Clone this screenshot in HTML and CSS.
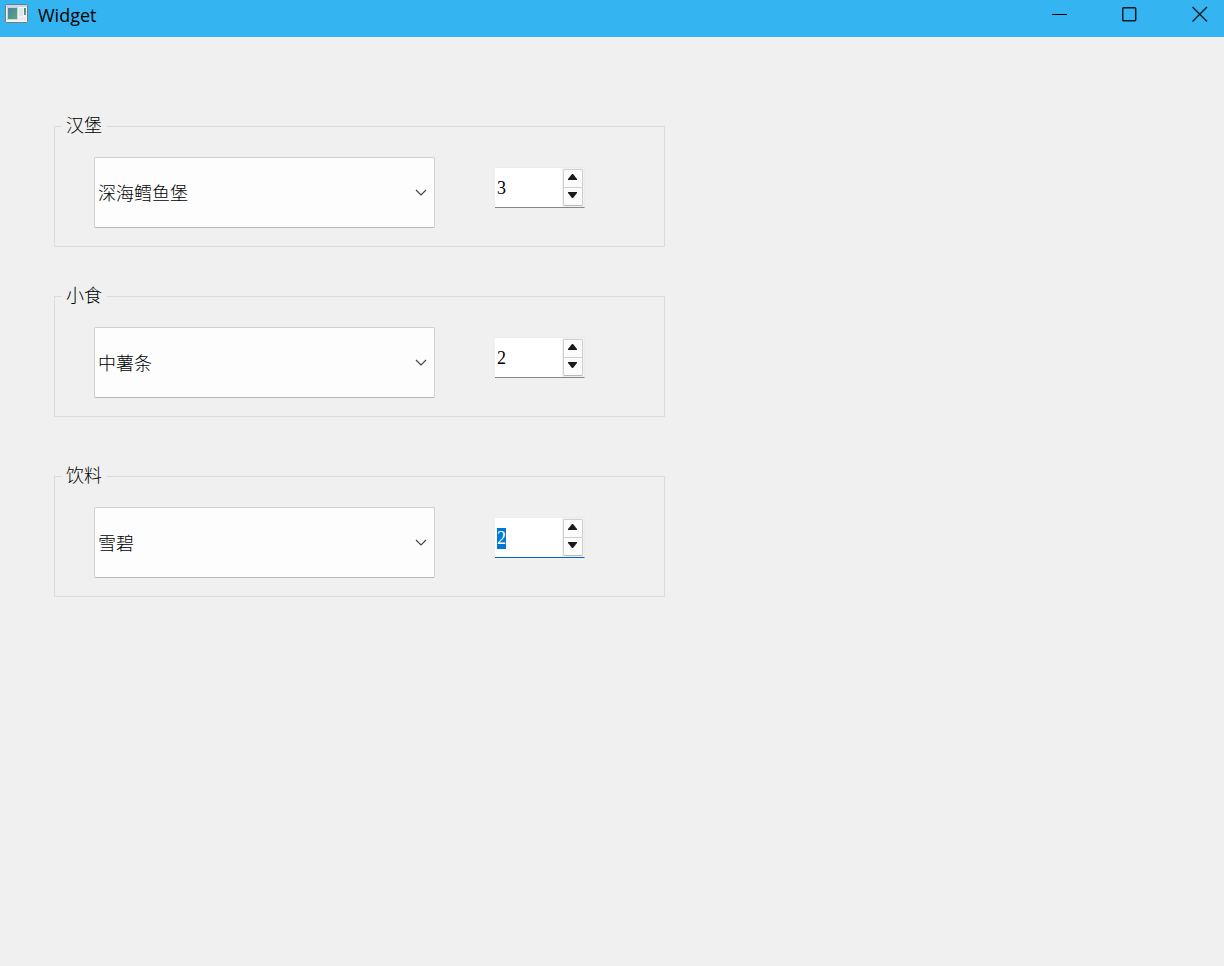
FILE: index.html
```html
<!DOCTYPE html>
<html lang="zh-CN">
<head>
    <meta charset="UTF-8">
    <meta name="viewport" content="width=device-width, initial-scale=1.0">
    <title>Widget</title>
    <link rel="stylesheet" href="styles.css">
</head>
<body>
    <header class="titlebar">
        <svg class="app-icon" width="24" height="20" viewBox="0 0 24 20" aria-hidden="true">
            <defs>
                <linearGradient id="pane" x1="0" y1="0" x2="1" y2="1">
                    <stop offset="0" stop-color="#4a7fa5"/>
                    <stop offset="1" stop-color="#5cab7a"/>
                </linearGradient>
            </defs>
            <rect x="0.5" y="0.5" width="22" height="18" rx="1" fill="#f4f4f4" stroke="#77797c"/>
            <rect x="1" y="1" width="21" height="2" fill="#b9dcf2"/>
            <rect x="2.5" y="3.5" width="10" height="12" fill="url(#pane)" stroke="#c9d2d6"/>
            <rect x="14" y="4" width="4" height="8" fill="#dfe5e8"/>
            <rect x="19" y="4" width="2" height="7" fill="url(#pane)"/>
            <rect x="14" y="13" width="7" height="3" fill="#e6eaec"/>
        </svg>
        <h1 class="window-title">Widget</h1>
        <div class="window-buttons">
            <button class="window-btn" type="button" aria-label="最小化">
                <svg width="16" height="16" viewBox="0 0 16 16"><path d="M0 8.5H15" stroke="#000"/></svg>
            </button>
            <button class="window-btn" type="button" aria-label="最大化">
                <svg width="16" height="16" viewBox="0 0 16 16"><rect x="0.7" y="1.7" width="13" height="13" rx="1" fill="none" stroke="#0a1a24" stroke-width="1.5"/></svg>
            </button>
            <button class="window-btn" type="button" aria-label="关闭">
                <svg width="16" height="16" viewBox="0 0 16 16"><path d="M0.5 1L15 15.5M15 1L0.5 15.5" stroke="#0a1a24" stroke-width="1.4"/></svg>
            </button>
        </div>
    </header>

    <main class="order-form">
        <fieldset class="group">
            <legend>汉堡</legend>
            <div class="combo">
                <select aria-label="汉堡">
                    <option>深海鳕鱼堡</option>
                </select>
                <svg class="chevron" width="12" height="8" viewBox="0 0 12 8"><path d="M1 1L6 6L11 1" fill="none" stroke="#444" stroke-width="1.2"/></svg>
            </div>
            <div class="spinbox">
                <input type="number" min="0" value="3" aria-label="汉堡数量">
                <div class="spin-buttons">
                    <button type="button" class="step" data-step="1" aria-label="增加"><svg width="10" height="6" viewBox="0 0 10 6"><path d="M0 6V5L4 0H5L9 5V6Z"/></svg></button>
                    <button type="button" class="step" data-step="-1" aria-label="减少"><svg width="10" height="6" viewBox="0 0 10 6"><path d="M0 0V1L4 6H5L9 1V0Z"/></svg></button>
                </div>
            </div>
        </fieldset>

        <fieldset class="group">
            <legend>小食</legend>
            <div class="combo">
                <select aria-label="小食">
                    <option>中薯条</option>
                </select>
                <svg class="chevron" width="12" height="8" viewBox="0 0 12 8"><path d="M1 1L6 6L11 1" fill="none" stroke="#444" stroke-width="1.2"/></svg>
            </div>
            <div class="spinbox">
                <input type="number" min="0" value="2" aria-label="小食数量">
                <div class="spin-buttons">
                    <button type="button" class="step" data-step="1" aria-label="增加"><svg width="10" height="6" viewBox="0 0 10 6"><path d="M0 6V5L4 0H5L9 5V6Z"/></svg></button>
                    <button type="button" class="step" data-step="-1" aria-label="减少"><svg width="10" height="6" viewBox="0 0 10 6"><path d="M0 0V1L4 6H5L9 1V0Z"/></svg></button>
                </div>
            </div>
        </fieldset>

        <fieldset class="group group-drinks">
            <legend>饮料</legend>
            <div class="combo">
                <select aria-label="饮料">
                    <option>雪碧</option>
                </select>
                <svg class="chevron" width="12" height="8" viewBox="0 0 12 8"><path d="M1 1L6 6L11 1" fill="none" stroke="#444" stroke-width="1.2"/></svg>
            </div>
            <div class="spinbox">
                <input type="number" min="0" value="2" id="drink-count" aria-label="饮料数量">
                <div class="spin-buttons">
                    <button type="button" class="step" data-step="1" aria-label="增加"><svg width="10" height="6" viewBox="0 0 10 6"><path d="M0 6V5L4 0H5L9 5V6Z"/></svg></button>
                    <button type="button" class="step" data-step="-1" aria-label="减少"><svg width="10" height="6" viewBox="0 0 10 6"><path d="M0 0V1L4 6H5L9 1V0Z"/></svg></button>
                </div>
            </div>
        </fieldset>
    </main>

    <script>
        document.querySelectorAll('.step').forEach(btn => {
            btn.addEventListener('click', () => {
                const input = btn.closest('.spinbox').querySelector('input');
                if (btn.dataset.step === '1') {
                    input.stepUp();
                } else {
                    input.stepDown();
                }
                input.focus();
                input.select();
            });
        });

        const drinkCount = document.getElementById('drink-count');
        drinkCount.focus();
        drinkCount.select();
    </script>
</body>
</html>
```
FILE: styles.css
```css
* {
    box-sizing: border-box;
}

body {
    margin: 0;
    min-height: 100vh;
    background: #f0f0f0;
    color: #000;
    font-family: "Liberation Serif", "Noto Sans CJK SC", serif;
    font-size: 18px;
    font-weight: 300;
}

button, select, input {
    font: inherit;
    color: inherit;
}

.titlebar {
    display: flex;
    align-items: flex-start;
    height: 37px;
    padding: 4px 0 0 5px;
    background: #34b5f1;
}

.window-title {
    margin: 0 0 0 9px;
    font-family: "Open Sans", "Noto Sans", sans-serif;
    font-size: 18px;
    font-weight: 400;
    line-height: 22px;
}

.window-buttons {
    display: flex;
    gap: 22px;
    margin-left: auto;
}

.window-btn {
    display: flex;
    justify-content: center;
    width: 48px;
    padding: 2px 0;
    border: none;
    background: none;
}

.order-form {
    padding: 80px 54px;
}

.group {
    display: grid;
    grid-template-columns: minmax(0, 341px) 90px;
    column-gap: 60px;
    align-items: start;
    max-width: 611px;
    margin: 0 0 40px;
    padding: 21px 39px 18px;
    border: 1px solid #dcdcdc;
}

.group legend {
    margin-left: -32px;
    padding: 0 5px 0 4px;
    line-height: 19px;
}

.group-drinks {
    margin-top: 50px;
}

.combo {
    position: relative;
    height: 71px;
}

.combo select {
    width: 100%;
    height: 100%;
    padding: 2px 28px 0 3px;
    border: 1px solid #d0d0d0;
    border-bottom-color: #b8b8b8;
    border-radius: 2px;
    background: #fdfdfd;
    appearance: none;
    outline: none;
}

.chevron {
    position: absolute;
    top: 32px;
    right: 8px;
    pointer-events: none;
}

.spinbox {
    display: flex;
    height: 41px;
    margin-top: 10px;
    border: 1px solid #ececec;
    border-left: none;
    border-bottom-color: #868686;
    background: #f0f0f0;
}

.spinbox:focus-within {
    border-bottom-color: #0067c0;
}

.spinbox input {
    flex: 1;
    min-width: 0;
    padding: 2px 2px 0;
    border: none;
    background: #fff;
    outline: none;
    appearance: textfield;
}

.spinbox input::-webkit-inner-spin-button {
    appearance: none;
    margin: 0;
}

.spinbox input::selection {
    background: #0078d7;
    color: #fff;
}

.spin-buttons {
    display: flex;
    flex-direction: column;
    width: 20px;
    height: 37px;
    margin: 1px 1px 0;
    border: 1px solid #d0d0d0;
    border-bottom-color: #b8b8b8;
    border-radius: 2px;
    background: #fbfbfb;
}

.step {
    display: flex;
    flex: 1;
    align-items: center;
    justify-content: center;
    padding: 0 0 3px;
    border: none;
    background: none;
    fill: #1a1a1a;
}

.step + .step {
    border-top: 1px solid #d0d0d0;
}
```
